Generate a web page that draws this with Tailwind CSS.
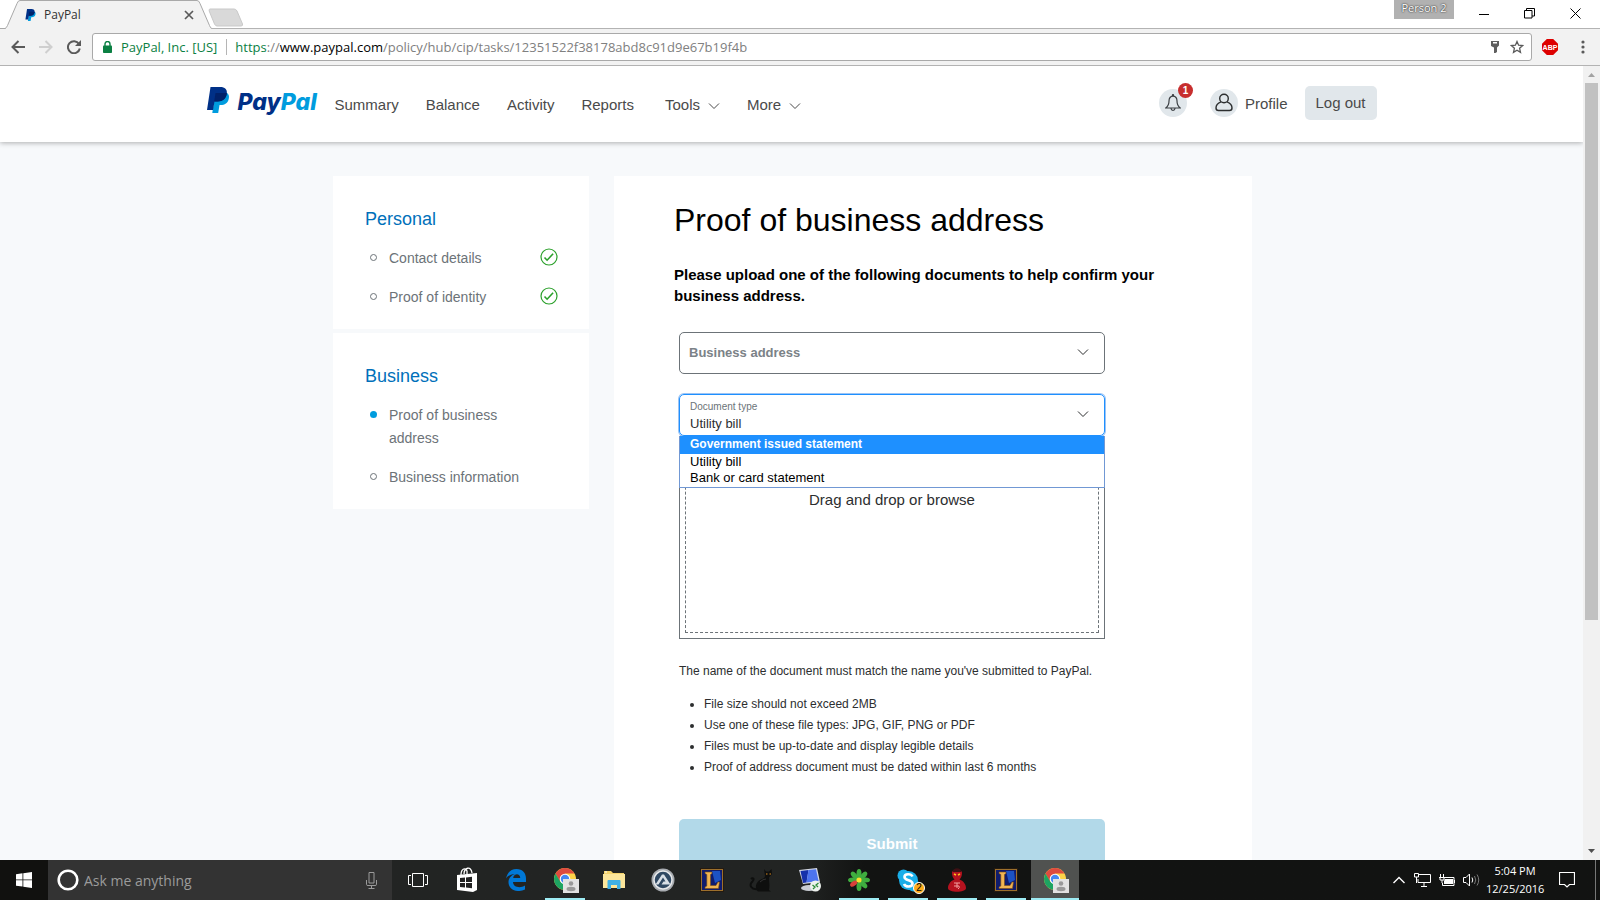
<!DOCTYPE html>
<html lang="en">
<head>
<meta charset="utf-8">
<title>PayPal</title>
<script src="https://cdn.jsdelivr.net/npm/@tailwindcss/browser@4"></script>
</head>
<body class="h-screen flex flex-col overflow-hidden bg-white font-['Liberation_Sans',Arial,sans-serif]">

<svg class="hidden" aria-hidden="true">
  <symbol id="pp" viewBox="0 0 22 26">
    <path fill="#009cde" d="M20 6c2 1.200 2.300 3.500 1.700 6-.9 4-3.800 6-8.200 6h-1l-1.300 8H5.300l.7-5L8.500 7Z"/>
    <path fill="#003087" d="M3.500 0h9.800c4.500 0 7.200 2.300 6.500 6.800-.8 5-4.200 7.700-9 7.700H7.500L6 23H0Z"/>
    <path fill="#012169" d="M8.500 6h11.300v.8c-.8 5-4.200 7.700-9 7.700H7.200Z"/>
  </symbol>
  <symbol id="chev" viewBox="0 0 12 8"><path d="M1 1.500l5 5 5-5" fill="none" stroke="currentColor"/></symbol>
  <symbol id="tick" viewBox="0 0 18 18"><circle cx="9" cy="9" r="8" fill="none" stroke="#2aa02a" stroke-width="1.200"/><path d="M4.500 9.500l2.600 2.700 6-6.400" fill="none" stroke="#2aa02a" stroke-width="1.600"/></symbol>
  <symbol id="chrome" viewBox="-2 -1 28 28">
    <circle cx="12" cy="12" r="11" fill="#fdd349"/>
    <path d="M2.500 6.500A11 11 0 0 1 21.500 6.500H12L7 15Z" fill="#de4b3f"/>
    <path d="M2.500 6.500A11 11 0 0 0 11.500 23L16.500 14.500 7.500 15Z" fill="#1da462"/>
    <circle cx="12" cy="12" r="5.300" fill="#fff"/><circle cx="12" cy="12" r="4.200" fill="#4688f4"/>
    <rect x="10" y="12" width="16" height="14" fill="#e2e2e2"/><circle cx="18" cy="16.500" r="2.300" fill="#999"/><ellipse cx="18" cy="22" rx="4.500" ry="2.200" fill="#999"/>
  </symbol>
  <symbol id="league" viewBox="0 0 24 24">
    <rect width="24" height="24" fill="#241a10"/><rect x="1.500" y="1.500" width="21" height="21" fill="#101c6e" stroke="#9c6f2c"/>
    <path d="M12 3h8l1 9-6 3Z" fill="#1c52c4"/>
    <path d="M5 4h7v1.500l-1.500 1V17.500H16l2-3.500h1.500L18.500 20.500H5V19l1.800-1V6.500L5 5.500Z" fill="#f0b552" stroke="#7a4c14" stroke-width=".6"/>
  </symbol>
</svg>

<!-- Tab strip -->
<header class="shrink-0 bg-[#f2f2f2] font-['Open_Sans','Noto_Sans',sans-serif]">
  <div class="relative h-[29px] bg-white border-b border-[#b3b3b3] flex items-start justify-between">
    <div class="flex">
      <div class="relative w-[212px] h-[29px]">
        <svg class="absolute inset-0" width="212" height="29" viewBox="0 0 212 29"><path d="M5 29Q6.500 28 7.500 25.500L17 3.500Q18 .5 20 .5H197Q199 .5 200 3.500L209.500 25.500Q210.500 28.500 212 28.500V29Z" fill="#f2f2f2"/><path d="M0 28.500H5Q6.500 28 7.500 25.500L17 3.500Q18 .5 20 .5H197Q199 .5 200 3.500L209.500 25.500Q210.500 28.500 212 28.500" fill="none" stroke="#a9a9a9"/></svg>
        <div class="relative h-[29px] flex items-center pl-[25px] pr-[18px]">
          <svg class="w-[11px] h-3"><use href="#pp"/></svg>
          <span class="ml-2 text-xs text-[#333]">PayPal</span>
          <button aria-label="Close tab" class="ml-auto"><svg width="10" height="10" viewBox="0 0 10 10"><path d="M1 1l8 8M9 1L1 9" stroke="#5a5a5a" stroke-width="1.700"/></svg></button>
        </div>
      </div>
      <button aria-label="New tab" class="-ml-1 mt-1.5"><svg width="36" height="19" viewBox="0 0 36 19"><path d="M2 1H26Q28 1 29 3L34.500 16Q35 18 33 18H9Q7.500 18 6.500 16L1.200 3Q.8 1 2 1Z" fill="#d9d9d9" stroke="#c9c9c9"/></svg></button>
    </div>
    <div class="flex items-start text-black">
      <button class="h-[19px] w-[60px] bg-[#b1b1b1] text-white text-[11px] leading-4 pb-1 [text-shadow:0_0_2px_#333,0_0_1px_#333]">Person 2</button>
      <button aria-label="Minimize" class="w-[46px] h-[27px] ml-[7px] flex items-center justify-center"><svg width="10" height="10"><path d="M0 5.500h10" stroke="#000"/></svg></button>
      <button aria-label="Restore" class="w-[45px] h-[27px] flex items-center justify-center"><svg width="11" height="11" viewBox="0 0 11 11"><path d="M.5 2.500h7.500v7.500H.5zM2.500 2.500V.5h8v7.500H8" fill="none" stroke="#000"/></svg></button>
      <button aria-label="Close" class="w-[46px] h-[27px] mr-0.5 flex items-center justify-center"><svg width="11" height="11" viewBox="0 0 11 11"><path d="M.5 .5l10 10M10.500 .5l-10 10" stroke="#000"/></svg></button>
    </div>
  </div>
  <!-- Toolbar -->
  <div class="h-[37px] border-b border-[#b3b3b3] flex items-center pl-[11px] pr-[15px]">
    <button aria-label="Back"><svg width="14" height="14" viewBox="0 0 14 14"><path d="M14 7H1.500M7.500 1L1.500 7l6 6" fill="none" stroke="#5a5a5a" stroke-width="2"/></svg></button>
    <button aria-label="Forward" disabled class="ml-3.5"><svg width="14" height="14" viewBox="0 0 14 14"><path d="M0 7h12.500M6.500 1l6 6-6 6" fill="none" stroke="#cfcfcf" stroke-width="2"/></svg></button>
    <button aria-label="Reload" class="ml-3.5"><svg width="14" height="14" viewBox="0 0 14 14"><path d="M12 4A6 6 0 1 0 12.800 8.500" fill="none" stroke="#5a5a5a" stroke-width="2"/><path d="M14 0v6H8Z" fill="#5a5a5a"/></svg></button>
    <div class="ml-[11px] flex-1 h-7 bg-white border border-[#a9a9a9] rounded-[3px] flex items-center pl-2.5 pr-[7px] text-sm">
      <svg width="9" height="12" viewBox="0 0 9 12"><rect y="4.500" width="9" height="7.500" rx=".8" fill="#0b8043"/><path d="M2 5V3a2.500 2.500 0 0 1 5 0v2" fill="none" stroke="#0b8043" stroke-width="1.400"/></svg>
      <span class="ml-[9px] text-[13px] text-[#0b8043] whitespace-nowrap">PayPal, Inc. [US]</span>
      <span class="ml-[9px] mr-2 w-px h-4 bg-[#b5b5b5]"></span>
      <div role="textbox" aria-label="Address" contenteditable="true" class="flex-1 text-[13px] whitespace-nowrap text-[#808080]"><span class="text-[#0b8043]">https</span>://<span class="text-black">www.paypal.com</span>/policy/hub/cip/tasks/12351522f38178abd8c91d9e67b19f4b</div>
      <button aria-label="Saved passwords"><svg width="8" height="12" viewBox="0 0 8 12"><path d="M0 0h8v4.500L6 6.500V11L4.500 12H3V6.500L0 5ZM2 1v1.500h4V1Z" fill="#5f5f5f" fill-rule="evenodd"/></svg></button>
      <button aria-label="Bookmark this page" class="ml-[11px]"><svg width="14" height="14" viewBox="0 0 14 14"><path d="M7 1.500l1.600 3.700 4 .4-3 2.700.9 4L7 10.200l-3.500 2.100.9-4-3-2.700 4-.4Z" fill="none" stroke="#5a5a5a" stroke-width="1.300"/></svg></button>
    </div>
    <button aria-label="Adblock Plus" class="ml-2.5 size-4 flex items-center justify-center text-white text-[7px] leading-none font-bold font-['Liberation_Sans',sans-serif] bg-[#d00] [clip-path:polygon(30%_0,70%_0,100%_30%,100%_70%,70%_100%,30%_100%,0_70%,0_30%)]">ABP</button>
    <button aria-label="Menu" class="ml-[23px]"><svg width="4" height="14" viewBox="0 0 4 14" fill="#5a5a5a"><circle cx="2" cy="2" r="1.600"/><circle cx="2" cy="7" r="1.600"/><circle cx="2" cy="12" r="1.600"/></svg></button>
  </div>
</header>

<!-- Page viewport -->
<div class="flex-1 min-h-0 flex">
  <div class="flex-1 min-w-0 overflow-hidden bg-[#f7f9fb] flex flex-col">
    <div class="relative shrink-0 h-[76px] bg-white shadow-[0_1px_5px_rgba(0,0,0,0.3)]">
      <div class="max-w-[1170px] mx-auto h-full pt-[19px] flex items-start text-[15px] leading-[34px] text-[#4a4a4a]">
        <a href="#" aria-label="PayPal" class="w-32 flex items-start mt-0.5">
          <svg class="w-[22px] h-[26px]"><use href="#pp"/></svg>
          <span class="ml-[9px] mt-0.5 text-[23px] leading-[26px] font-extrabold italic font-[Inter,sans-serif] text-[#003087]">Pay<span class="text-[#009cde]">Pal</span></span>
        </a>
        <nav class="flex items-center gap-[27px] mt-[3px]">
          <a href="#">Summary</a><a href="#">Balance</a><a href="#">Activity</a><a href="#">Reports</a>
          <div class="flex gap-[27px] ml-1">
            <button class="flex items-center gap-2">Tools <svg class="w-3 h-2 mt-0.5"><use href="#chev"/></svg></button>
            <button class="flex items-center gap-2">More <svg class="w-3 h-2 mt-0.5"><use href="#chev"/></svg></button>
          </div>
        </nav>
        <div class="ml-auto flex items-center">
          <button aria-label="Notifications" class="relative size-7 rounded-full bg-[#e1e7eb] flex items-center justify-center">
            <svg width="16" height="18" viewBox="0 0 16 18" fill="none" stroke="#3b3f43" stroke-width="1.200"><path d="M8 1.800C5 2.300 4 4.500 4 7c0 4-1.200 5.500-3.200 7h14.400C13.200 12.500 12 11 12 7c0-2.500-1-4.700-4-5.200ZM6 14.500c.3 2.600 3.700 2.600 4 0"/><circle cx="8" cy="1.200" r=".6"/></svg>
            <span class="absolute -top-1.5 -right-1.5 size-[15px] rounded-full bg-[#c72e2e] text-white text-[10px] leading-[15px] font-bold">1</span>
          </button>
          <a href="#" class="ml-[23px] flex items-center gap-[7px]"><span class="size-7 rounded-full bg-[#e1e7eb] flex items-center justify-center"><svg width="18" height="20" viewBox="0 0 18 20" fill="none" stroke="#2c2e2f" stroke-width="1.400"><circle cx="9" cy="5.500" r="4.300"/><path d="M6 8.800C2.500 10 1 12.500 1 15c0 1.800.8 2.500 2.500 2.500h11c1.700 0 2.500-.7 2.500-2.500 0-2.500-1.500-5-5-6.200"/></svg></span><span class="mt-0.5">Profile</span></a>
          <button class="ml-[17px] w-[72px] h-[34px] rounded-[5px] bg-[#e1e7eb]">Log out</button>
        </div>
      </div>
    </div>

    <div class="flex-1 min-h-0 w-full max-w-[921px] mx-auto pt-[34px] pl-0.5 flex gap-[25px]">
      <aside class="w-64 shrink-0 flex flex-col gap-1 text-sm leading-[23px] text-[#6c7378]">
        <section class="bg-white pt-[30px] pl-8 pr-[31px] pb-5">
          <h2 class="text-lg leading-[26px] text-[#0070ba]">Personal</h2>
          <ul class="mt-[15px] flex flex-col gap-4">
            <li class="flex items-start"><span class="mt-[7px] ml-[5px] mr-3 size-[7px] shrink-0 rounded-full border border-[#6c7378]"></span><a href="#">Contact details</a><svg class="ml-auto mt-px size-[18px]"><use href="#tick"/></svg></li>
            <li class="flex items-start"><span class="mt-[7px] ml-[5px] mr-3 size-[7px] shrink-0 rounded-full border border-[#6c7378]"></span><a href="#">Proof of identity</a><svg class="ml-auto mt-px size-[18px]"><use href="#tick"/></svg></li>
          </ul>
        </section>
        <section class="bg-white pt-[30px] pl-8 pr-[31px] pb-5">
          <h2 class="text-lg leading-[26px] text-[#0070ba]">Business</h2>
          <ul class="mt-[15px] flex flex-col gap-4">
            <li class="flex items-start"><span class="mt-[7px] ml-[5px] mr-3 size-[7px] shrink-0 rounded-full bg-[#009cde]"></span><a href="#">Proof of business<br>address</a></li>
            <li class="flex items-start"><span class="mt-[7px] ml-[5px] mr-3 size-[7px] shrink-0 rounded-full border border-[#6c7378]"></span><a href="#">Business information</a></li>
          </ul>
        </section>
      </aside>

      <main class="flex-1 bg-white pt-6 px-[60px]">
        <h1 class="text-[32px] leading-10 text-black">Proof of business address</h1>
        <p class="mt-6 text-[15px] leading-[21px] font-bold text-black">Please upload one of the following documents to help confirm your business address.</p>
        <form class="mt-[26px] ml-[5px] w-[426px] flex flex-col gap-5" onsubmit="return false">
          <div class="relative">
            <select aria-label="Business address" class="block w-full h-[42px] appearance-none border border-[#6c7378] rounded-[5px] bg-white pl-[9px] text-[13px] font-bold text-[#7b8287]"><option>Business address</option></select>
            <svg class="absolute right-4 top-4 w-3 h-2 text-[#2c2e2f] pointer-events-none"><use href="#chev"/></svg>
          </div>
          <div class="relative z-10">
            <label for="doctype" class="absolute left-[11px] top-[7px] text-[10px] leading-3 text-[#6c7378]">Document type</label>
            <select id="doctype" class="block w-full h-[42px] appearance-none border border-[#1e90ff] rounded-[5px] ring-1 ring-[#9cc4f5] bg-transparent pl-2.5 pt-[18px] text-[13px] text-[#2c2e2f]"><option>Utility bill</option><option>Government issued statement</option><option>Bank or card statement</option></select>
            <svg class="absolute right-4 top-4 w-3 h-2 text-[#2c2e2f] pointer-events-none"><use href="#chev"/></svg>
            <ul role="listbox" aria-label="Document type" class="absolute inset-x-0 top-full border border-t-0 border-[#7198d4] bg-white pb-px text-[13px] leading-4 text-black">
              <li role="option" class="pl-2.5 pb-px bg-[#1e90ff] text-white text-xs font-bold leading-[17px]">Government issued statement</li>
              <li role="option" aria-selected="true" class="pl-2.5 leading-4">Utility bill</li>
              <li role="option" class="pl-2.5">Bank or card statement</li>
            </ul>
          </div>
          <div class="h-[183px] border border-[#6c7378] p-[5px]">
            <button class="w-full h-full border border-dashed border-[#6c7378] pt-[27px] flex justify-center text-[15px] leading-5 text-[#2c2e2f]">Drag and drop or browse</button>
          </div>
          <div class="mt-0.5 text-xs leading-[21px] text-[#2c2e2f]">
            <p>The name of the document must match the name you've submitted to PayPal.</p>
            <ul class="mt-3 list-disc pl-[25px]">
              <li>File size should not exceed 2MB</li>
              <li>Use one of these file types: JPG, GIF, PNG or PDF</li>
              <li>Files must be up-to-date and display legible details</li>
              <li>Proof of address document must be dated within last 6 months</li>
            </ul>
          </div>
          <button class="mt-[21px] h-[50px] rounded-[5px] bg-[#b2d9e9] text-white text-[15px] font-bold">Submit</button>
        </form>
      </main>
    </div>
  </div>
  <!-- Scrollbar -->
  <div class="w-[17px] shrink-0 bg-[#f1f1f1] flex flex-col items-center justify-between">
    <svg width="17" height="17" viewBox="0 0 17 17"><path d="M5 11h7L8.500 7Z" fill="#a3a3a3"/></svg>
    <div class="w-[13px] flex-1"><div class="h-[70.6%] bg-[#c1c1c1]"></div></div>
    <svg width="17" height="17" viewBox="0 0 17 17"><path d="M5 6h7l-3.500 4Z" fill="#505050"/></svg>
  </div>
</div>

<!-- Taskbar -->
<footer class="shrink-0 h-10 bg-linear-to-r from-[#222423] from-50% to-[#121312] to-54% flex items-stretch text-white font-['Open_Sans','Noto_Sans',sans-serif]">
  <button aria-label="Start" class="w-12 bg-[#11110f] flex items-center justify-center"><svg width="16" height="16" viewBox="0 0 16 16" fill="#fff"><path d="M0 2.200l6.500-.9v6.200H0ZM7.300 1.200L16 0v7.500H7.300ZM0 8.300h6.500v6.300L0 13.700ZM7.300 8.300H16V16l-8.700-1.300Z"/></svg></button>
  <div class="w-[344px] bg-[#333] flex items-center pl-[9px] pr-[15px]">
    <svg width="22" height="22" viewBox="0 0 22 22"><circle cx="11" cy="11" r="9.300" fill="none" stroke="#fff" stroke-width="2.600"/></svg>
    <input type="text" aria-label="Search" placeholder="Ask me anything" class="ml-[5px] mt-px flex-1 min-w-0 bg-transparent text-sm placeholder:text-[#9b9b9b]">
    <svg width="11" height="17" viewBox="0 0 11 17" fill="none" stroke="#9b9b9b"><path d="M3 .5h5v10.500H3ZM.5 8v4.500Q.5 13.500 2 13.500h7q1.500 0 1.500-1V8M5.500 13.500v3M2.500 16.500h6"/></svg>
  </div>
  <div class="flex gap-px pl-0.5 [&>button]:w-12 [&>button]:flex [&>button]:items-center [&>button]:justify-center [&>button]:border-y-2 [&>button]:border-transparent">
    <button aria-label="Task view"><svg width="20" height="14" viewBox="0 0 20 14" fill="none" stroke="#fff"><path d="M4.500 .5h11v13h-11ZM3 2.500H.5v9H3M17 2.500h2.500v9H17"/></svg></button>
    <button aria-label="Store"><svg width="24" height="26" viewBox="0 0 24 26"><path d="M2 8l20-2v17L18 25 2 23Z" fill="#fff"/><path d="M6 8C6 2 10 0 12 4v3M9 7c0-6 7-9 8-1" fill="none" stroke="#fff" stroke-width="1.300"/><path d="M5 11l5-.5v4.500H5ZM11 10.400l6-.6V15h-6ZM5 16h5v4.500L5 20ZM11 16h6v5.200l-6-.6Z" fill="#222"/></svg></button>
    <button aria-label="Edge"><svg width="20" height="22" viewBox="0 0 20 22"><path d="M0 9.500C1.500 3 5.500 0 10.500 0 16.500 0 20 4 20 9.500V13H7c.2 5.500 7.500 6.500 12 3.500v4C12 24 2.500 21.500 2.500 13 2.500 9 5.500 6 9 5 4.500 5 1.500 7.200 0 9.500ZM7.200 9h7c.2-5-6.500-5-7 0Z" fill="#0078d7" fill-rule="evenodd"/></svg></button>
    <button aria-label="Chrome" class="relative"><svg class="size-7"><use href="#chrome"/></svg><span class="absolute inset-x-1 -bottom-0.5 h-0.5 bg-[#9eecf4]"></span></button>
    <button aria-label="File Explorer"><svg width="22" height="20" viewBox="0 0 22 20"><path d="M1 1h7l2 2h11v15H1Z" fill="#f5d36b"/><path d="M0 4h22v14H0Z" fill="#fce69b"/><path d="M4.500 19V11q0-1 1-1h11q1 0 1 1v8h-3.500v-4H8v4Z" fill="#3fb0e6"/><path d="M2 2h2" stroke="#fff"/></svg></button>
    <button aria-label="Launcher"><svg width="24" height="24" viewBox="0 0 24 24"><circle cx="12" cy="12" r="11.500" fill="#a9adb2"/><circle cx="12" cy="12" r="9" fill="#2f4862" stroke="#e6e8ea" stroke-width="1.500"/><path d="M4.500 16.500L11 6.500h2l6.500 10h-9l2-3h2L12 9.500l-4.500 7Z" fill="#d8dfe6"/></svg></button>
    <button aria-label="League of Legends"><svg class="size-6"><use href="#league"/></svg></button>
    <button aria-label="Cat"><svg width="24" height="24" viewBox="0 0 24 24"><path d="M15 1l2 2.500h3L22.500 1l.5 5-3 3.500c0 4 1 7 0 12.500l2 1.500H9C6 21 6 16 10 12.500c3-2 6-2 6-4.500Z" fill="#0e0f0e"/><path d="M9 21C2 22 0 17 3 14s1-5-1-3" fill="none" stroke="#0e0f0e" stroke-width="2"/><path d="M11 14q3-3 6-3" fill="none" stroke="#333" stroke-width="1"/><path d="M17 6h1.500M20.500 6H22" stroke="#d98a1c" stroke-width="1.200"/></svg></button>
    <button aria-label="Remote Desktop"><svg width="24" height="24" viewBox="0 0 24 24"><path d="M1 2l18-2 3 14-17 2Z" fill="#d5d9e4"/><path d="M2.500 3l8-1-2 12.500-3.500.5Z" fill="#1631ab"/><path d="M10.500 2L18 1.300l2.500 11.700-12 1.500Z" fill="#4d74ef"/><ellipse cx="11" cy="20" rx="8" ry="3" fill="#c9cdd3"/><circle cx="17.500" cy="18" r="5.500" fill="#edf1ed"/><path d="M14.500 17l2.500 2-2 2M20.500 15l-2.500 2 2 2" fill="none" stroke="#298a34" stroke-width="1.300"/></svg></button>
    <button aria-label="ICQ" class="relative"><svg width="22" height="22" viewBox="0 0 22 22"><g fill="#3fae3f"><ellipse cx="11" cy="4.500" rx="2.500" ry="4.500"/><ellipse cx="11" cy="4.500" rx="2.500" ry="4.500" transform="rotate(45 11 11)"/><ellipse cx="11" cy="4.500" rx="2.500" ry="4.500" transform="rotate(90 11 11)"/><ellipse cx="11" cy="4.500" rx="2.500" ry="4.500" transform="rotate(135 11 11)"/><ellipse cx="11" cy="4.500" rx="2.500" ry="4.500" transform="rotate(180 11 11)"/><ellipse cx="11" cy="4.500" rx="2.500" ry="4.500" transform="rotate(270 11 11)"/><ellipse cx="11" cy="4.500" rx="2.500" ry="4.500" transform="rotate(315 11 11)"/></g><ellipse cx="11" cy="4.500" rx="2.300" ry="4" fill="#d9413a" transform="rotate(235 11 11)"/><circle cx="11" cy="11" r="2.600" fill="#fbe02e"/></svg><span class="absolute inset-x-1 -bottom-0.5 h-0.5 bg-[#9eecf4]"></span></button>
    <button aria-label="Skype" class="relative"><svg width="23" height="23" viewBox="0 0 23 23"><circle cx="11.500" cy="11.500" r="9.500" fill="#1aaee8"/><circle cx="6.500" cy="6.500" r="6" fill="#1aaee8"/><circle cx="16.500" cy="16.500" r="6" fill="#1aaee8"/><path d="M15.500 7.500C14 4.500 7.500 4.500 7.500 8c0 4 8 2.500 8 6.500 0 4-7 4-8.500.5" fill="none" stroke="#fff" stroke-width="2.600"/></svg><span class="absolute right-[7px] bottom-1 size-3 rounded-full border border-white bg-[#fba919] text-black text-[10px] leading-[10px] font-['Liberation_Sans',sans-serif]">2</span><span class="absolute inset-x-1 -bottom-0.5 h-0.5 bg-[#9eecf4]"></span></button>
    <button aria-label="Game" class="relative"><svg width="18" height="24" viewBox="0 0 18 24"><path d="M4 5C4 0 14 0 14 5c0 3-1 5-2.500 6.500C16 13 18 17 18 20c0 5-18 5-18 0 0-3 2-7 6.500-8.500C5 10 4 8 4 5Z" fill="#b5121f"/><path d="M4.500 4C5-1 13-1 13.500 4Z" fill="#3d1014"/><path d="M6 6l2 1M12 6l-2 1" stroke="#ffc21c" stroke-width="1.400"/><path d="M6 15h6M9 15v5M6 18h5q1 2-1 3" fill="none" stroke="#f2a0a0"/></svg><span class="absolute inset-x-1 -bottom-0.5 h-0.5 bg-[#9eecf4]"></span></button>
    <button aria-label="League client" class="relative"><svg class="size-6"><use href="#league"/></svg><span class="absolute inset-x-1 -bottom-0.5 h-0.5 bg-[#9eecf4]"></span></button>
    <button aria-label="Chrome, Person 2" class="relative bg-[#505250]"><svg class="size-7"><use href="#chrome"/></svg><span class="absolute inset-x-0 -bottom-0.5 h-0.5 bg-[#9eecf4]"></span></button>
  </div>
  <div class="ml-auto flex items-center pr-1">
    <button aria-label="Show hidden icons"><svg width="12" height="8" viewBox="0 0 12 8"><path d="M.5 7L6 1.500 11.500 7" fill="none" stroke="#fff" stroke-width="1.400"/></svg></button>
    <button aria-label="Network" class="ml-[9px]"><svg width="17" height="14" viewBox="0 0 17 14" fill="none" stroke="#fff"><path d="M5 1.500h11.500v8H4V6M7 13.500h6M10 9.500v4M.5 .5h4V4h-4ZM2.500 4v6"/></svg></button>
    <button aria-label="Battery" class="ml-2"><svg width="17" height="13" viewBox="0 0 17 13"><path d="M5 3.500h10v8H3.500V9M15.500 6v3" fill="none" stroke="#fff"/><path d="M6 5h8v5H5V7Z" fill="#fff"/><path d="M1.500 0v3M4.500 0v3M0 3.500h6M1 4v2h4V4M3 6v3" fill="none" stroke="#fff"/></svg></button>
    <button aria-label="Volume" class="ml-[7px]"><svg width="17" height="14" viewBox="0 0 17 14" fill="none" stroke="#fff"><path d="M.5 4.500h2.500L6.500 1v12L3 9.500H.5Z"/><path d="M9 4.500q1.500 2.500 0 5"/><path d="M11.500 3q2.500 4 0 8M14 1.500q3.500 5.500 0 11" stroke="#777"/></svg></button>
    <time datetime="2016-12-25T17:04" class="ml-1.5 w-[58px] text-center text-[11px] leading-[18px] whitespace-nowrap">5:04 PM<br>12/25/2016</time>
    <button aria-label="Action center" class="ml-[15px] mr-5"><svg width="16" height="16" viewBox="0 0 16 16"><path d="M.5 .5h15v12H10.500L8 15l-2.500-2.500H.5Z" fill="none" stroke="#fff" stroke-width="1.200"/></svg></button>
    <span class="self-stretch w-px bg-[#777]"></span>
  </div>
</footer>
</body>
</html>
